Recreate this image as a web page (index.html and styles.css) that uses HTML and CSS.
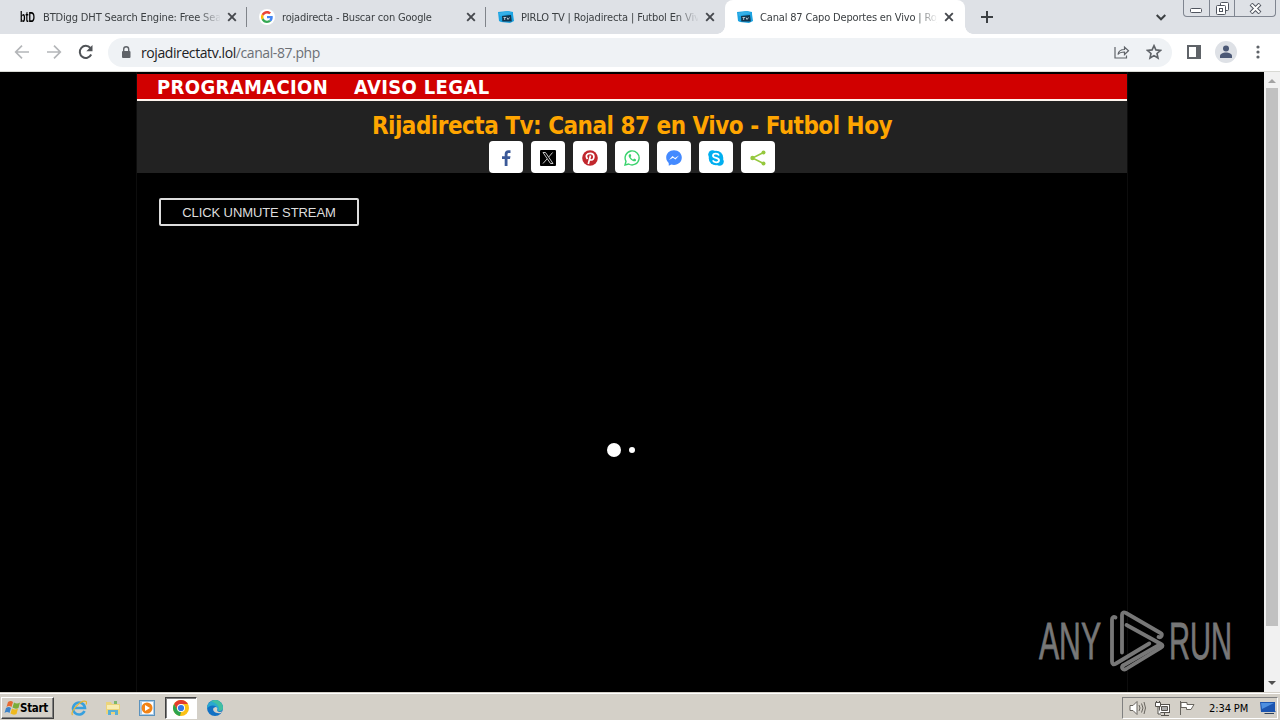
FILE: index.html
```
<!DOCTYPE html>
<html lang="es">
<head>
    <meta charset="UTF-8">
    <meta name="viewport" content="width=device-width, initial-scale=1.0">
    <title>Canal 87 Capo Deportes en Vivo</title>
    <link rel="stylesheet" href="styles.css">
</head>
<body>

    <svg class="defs" width="0" height="0">
        <symbol id="close" viewBox="0 0 10 10"><path d="M1.2 1.2l7.6 7.6M8.8 1.2L1.2 8.8" stroke="#45484d" stroke-width="1.9"/></symbol>
        <symbol id="tv" viewBox="0 0 16 16">
            <path d="M0 3l10-1 5 1v2l1 7-4 2-9-1-2-1z" fill="#1ba3e2"/>
            <path d="M1 4l9-2 4 2-12 3z" fill="#35b0e8"/>
            <path d="M4 7l9-1 .8 6.500-9.500 0z" fill="#12364f"/>
            <path d="M5.500 8.500h2.500M6.700 8.500v2.500M9 8.500l1 2 1.500-2" stroke="#b9c6cf" fill="none"/>
        </symbol>
    </svg>

    <header class="tabs">
        <div class="tab">
            <span class="favicon btd">btD</span>
            <span class="title t1">BTDigg DHT Search Engine: Free Search</span>
            <svg class="x"><use href="#close"/></svg>
        </div>
        <div class="tab">
            <span class="favicon google"><svg width="12" height="12" viewBox="0 0 48 48">
                <path fill="#EA4335" d="M24 9.500c3.500 0 6.700 1.200 9.200 3.600l6.900-6.900C35.900 2.400 30.500 0 24 0 14.600 0 6.500 5.400 2.600 13.200l8 6.200C12.400 13.700 17.700 9.500 24 9.500z"/>
                <path fill="#4285F4" d="M47 24.500c0-1.600-.2-3.100-.4-4.500H24v9h12.900c-.6 3-2.200 5.500-4.700 7.200l7.700 6C44.400 38 47 31.800 47 24.500z"/>
                <path fill="#FBBC05" d="M10.500 28.600a14 14 0 0 1 0-9.200l-8-6.200a24 24 0 0 0 0 21.600z"/>
                <path fill="#34A853" d="M24 48c6.500 0 11.900-2.100 15.900-5.800l-7.700-6c-2.200 1.500-5 2.300-8.200 2.300-6.300 0-11.600-4.200-13.500-9.900l-8 6.200C6.500 42.600 14.600 48 24 48z"/>
            </svg></span>
            <span class="title t2">rojadirecta - Buscar con Google</span>
            <svg class="x"><use href="#close"/></svg>
        </div>
        <div class="tab last">
            <svg class="favicon"><use href="#tv"/></svg>
            <span class="title t3">PIRLO TV | Rojadirecta | Futbol En Vivo</span>
            <svg class="x"><use href="#close"/></svg>
        </div>
        <div class="tab active">
            <svg class="favicon"><use href="#tv"/></svg>
            <span class="title t4">Canal 87 Capo Deportes en Vivo | Rojadirecta</span>
            <svg class="x"><use href="#close"/></svg>
        </div>
        <svg class="plus" width="12" height="12"><path d="M6 0v12M0 6h12" stroke="#3c4043" stroke-width="2"/></svg>
        <svg class="chevron" width="10" height="7"><path d="M.7 1l4.300 4.300L9.300 1" fill="none" stroke="#3c4043" stroke-width="2"/></svg>
        <div class="window-btns">
            <span><svg width="13" height="5"><rect x=".5" y=".5" width="11" height="4" rx="1" fill="#fff" stroke="#50555f"/></svg></span>
            <span><svg width="13" height="13" fill="#fff" stroke="#50555f"><rect x="4.500" y=".5" width="8" height="8" rx="1"/><rect x=".5" y="3.500" width="9" height="9" rx="1"/><rect x="3.500" y="6.500" width="3" height="3"/></svg></span>
            <span><svg width="13" height="11"><path d="M2 1l9 9M11 1l-9 9" stroke="#50555f" stroke-width="4"/><path d="M2.500 1.500l8 8M10.500 1.500l-8 8" stroke="#fff" stroke-width="2"/></svg></span>
        </div>
    </header>

    <div class="toolbar">
        <div class="nav">
            <svg width="16" height="16" fill="none" stroke="#b4b6b9" stroke-width="1.700"><path d="M15 8H2M8 1.700L1.700 8 8 14.300"/></svg>
            <svg width="16" height="16" fill="none" stroke="#b4b6b9" stroke-width="1.700"><path d="M1 8h13M8 1.700L14.300 8 8 14.300"/></svg>
            <svg width="16" height="16"><path d="M13.200 10.500A6 6 0 1 1 12.400 4" fill="none" stroke="#505357" stroke-width="2"/><path d="M14.500 1v6.200H8.300z" fill="#505357"/></svg>
        </div>
        <div class="address">
            <svg class="lock" width="10" height="13"><rect x="1" y="5" width="8.500" height="7" rx="1" fill="#5f6368"/><path d="M2.700 5V3.200a2.500 2.500 0 0 1 5 0V5" fill="none" stroke="#5f6368" stroke-width="1.400"/></svg>
            <span class="url">rojadirectatv.lol<span class="path">/canal-87.php</span></span>
            <svg class="share" width="16" height="14" fill="none" stroke="#5f6368" stroke-width="1.200"><path d="M1 2v11h11.500v-2.500M4 9.500c.5-3.500 3-5 6.500-5V2l4 3.700-4 3.800V7C7.500 7 5.500 7.500 4 9.500z"/></svg>
            <svg width="16" height="16"><path d="M8 1.700l1.900 4.200 4.600.5L11 9.500l1 4.500-4-2.400L4 14l1-4.500-3.500-3.100 4.600-.5z" fill="none" stroke="#5f6368" stroke-width="1.600"/></svg>
        </div>
        <svg class="panel" width="14" height="14"><rect x="1" y="1" width="12" height="12" fill="none" stroke="#5f6368" stroke-width="2"/><path d="M9 1h4v12H9z" fill="#5f6368"/></svg>
        <svg class="avatar" width="22" height="22"><circle cx="11" cy="11" r="11" fill="#dee1e6"/><circle cx="11" cy="7.500" r="3" fill="#4c5976"/><path d="M5 17v-2c0-2 3-3.500 6-3.500s6 1.500 6 3.500v2z" fill="#4c5976"/></svg>
        <svg width="4" height="14" fill="#5f6368"><circle cx="2" cy="2" r="1.600"/><circle cx="2" cy="7" r="1.600"/><circle cx="2" cy="12" r="1.600"/></svg>
    </div>

    <div class="viewport">
        <div class="page">
            <nav class="menu">
                <a class="m1">PROGRAMACION</a>
                <a class="m2">AVISO LEGAL</a>
            </nav>
            <div class="heading">
                <h1>Rijadirecta Tv: Canal 87 en Vivo - Futbol Hoy</h1>
                <div class="social">
                    <span><svg viewBox="0 0 16 16"><path d="M6.700 16V9H4V6.200h2.700V4c0-2.500 1.400-3.800 3.700-3.800l2.100.1v2.600H11c-1.200 0-1.500.6-1.500 1.400v1.900h3L12 9H9.500v7z" fill="#3b5998"/></svg></span>
                    <span><svg viewBox="0 0 16 16"><rect width="16" height="16" rx="1" fill="#000"/><path d="M3 2.500h2.500l7.500 11h-2.500zM12.600 2.500L8.700 7M7 9l-4 4.500" fill="none" stroke="#ddd" stroke-width=".9"/></svg></span>
                    <span><svg viewBox="0 0 16 16"><circle cx="8" cy="8" r="7.800" fill="#c1272d"/><path d="M5.500 9C3 5.500 5 3.300 8.200 3.300c5 0 4.500 6.700 1.100 6.700-1 0-1.600-.6-1.600-.6M8.500 5.500L6.300 14" fill="none" stroke="#fff" stroke-width="1.700"/></svg></span>
                    <span><svg viewBox="0 0 16 16"><path d="M1 15l1-3.700A7 7 0 1 1 4.700 14z" fill="#fff" stroke="#3bd36e" stroke-width="1.400"/><path d="M5.400 4.200c-2 1.500.5 4.500 2 5.700 1.700 1.400 3.700 2.200 4.600.5v-1L10.200 8.500l-1 1C8 9 7 8 6.500 6.900l.8-1L6.500 4z" fill="#3bd36e"/></svg></span>
                    <span><svg viewBox="0 0 16 16"><path d="M8 .3C3.500.3.200 3.400.2 7.600c0 2.300 1 4.200 2.500 5.400L2.800 15.700l2.500-1.200c.9.200 1.700.4 2.700.4 4.500 0 7.800-3.100 7.800-7.300S12.500.3 8 .3z" fill="#448aff"/><path d="M3 10l3.500-4L9 8l4-2.400-3.500 4L7 7.700z" fill="#fff"/></svg></span>
                    <span><svg viewBox="0 0 16 16"><circle cx="4.500" cy="4.500" r="4.300" fill="#00aff0"/><circle cx="11.500" cy="11.500" r="4.300" fill="#00aff0"/><circle cx="8" cy="8" r="7.300" fill="#00aff0"/><path d="M11 5.500C10 3 5 3 5 5.700c0 2.900 6 1.600 6 4.500 0 2.700-5 2.800-6.200.2" fill="none" stroke="#fff" stroke-width="1.800"/></svg></span>
                    <span><svg viewBox="0 0 16 16"><path d="M13.500 2.500L2.500 8l11 5.500" fill="none" stroke="#95c83d" stroke-width="1.500"/><g fill="#95c83d"><circle cx="13.500" cy="2.500" r="2"/><circle cx="2.500" cy="8" r="2.200"/><circle cx="13.500" cy="13.500" r="2"/></g></svg></span>
                </div>
            </div>
            <div class="player">
                <button class="unmute">CLICK UNMUTE STREAM</button>
                <div class="loader"><i></i><i></i></div>
            </div>
        </div>
        <div class="scrollbar">
            <svg width="8" height="4"><path d="M0 4l4-4 4 4z" fill="#a3a3a3"/></svg>
            <div class="thumb"></div>
            <svg width="8" height="4"><path d="M0 0l4 4 4-4z" fill="#505050"/></svg>
        </div>
        <svg class="watermark" width="204" height="68" viewBox="0 0 204 68">
            <g fill="#777" stroke="#777" stroke-width=".8">
                <text x="1" y="50" textLength="62" lengthAdjust="spacingAndGlyphs">ANY</text>
                <text x="131" y="50" textLength="63" lengthAdjust="spacingAndGlyphs">RUN</text>
            </g>
            <g fill="none" stroke="#777" stroke-width="3.800" stroke-linejoin="round" stroke-linecap="round">
                <path d="M77.500 8.500c-2-1.200-3.500 0-3.500 2v42c0 3 1.500 3.500 4 2l33.300-20"/>
                <path d="M84 43.500V6c0-2.500 1.500-3.300 4-2l34.500 20c2.500 1.500 1 5-2 4"/>
                <path d="M88.500 16l34.500 19c2 1.200 2 2.500 0 3.700L88 60c-3 1.500-5.500-1.500-3-3.500"/>
                <path d="M85 56.500l37-21"/>
            </g>
        </svg>
    </div>

    <footer class="taskbar">
        <div class="start">
            <svg width="17" height="16" viewBox="0 0 17 16"><path d="M4 2q3-2 5 0L7.500 7Q5 5 2.500 7z" fill="#e66a32"/><path d="M10 2.500q3 2 6 0L14.500 8q-3 1.500-6-.5z" fill="#7aad3b"/><path d="M2 8q3-2 5 0l-1.500 5Q3 11 .5 13z" fill="#3c83c9"/><path d="M8 8.500q3 2 6 0L12.500 14q-3 1.500-6-.5z" fill="#efb91e"/></svg>
            <span>Start</span>
        </div>
        <div class="apps">
            <span><svg viewBox="0 0 16 16"><path d="M13.500 11a6 6 0 1 1 .5-3H4" fill="none" stroke="#38a0de" stroke-width="2.600"/><path d="M1.500 15C-1 12 10-1 15 1.500c.8.500.5 2 0 3" fill="none" stroke="#e7b52f" stroke-width="1.200"/></svg></span>
            <span><svg viewBox="0 0 16 16"><path d="M1 2h5l1 2h8v10H1z" fill="#ecd47a"/><path d="M2 5h12v4H2z" fill="#f8edb2"/><path d="M3 15v-5h10v5h-3v-3H6v3z" fill="#58afd5"/><path d="M9 1h3v3H9z" fill="#7cb76a"/></svg></span>
            <span><svg viewBox="0 0 16 16"><rect x=".5" y=".5" width="15" height="15" fill="#a9cbe8" stroke="#5b92bd"/><rect x="3" y="2" width="11" height="12" fill="#fff"/><circle cx="8" cy="8" r="5.500" fill="#f28316"/><path d="M6 5l5 3-5 3z" fill="#fff"/></svg></span>
            <span class="current"><svg viewBox="0 0 16 16"><circle cx="8" cy="8" r="8" fill="#fbc116"/><path d="M1.100 4A8 8 0 0 1 14.900 4H8L4.500 10z" fill="#e33b2e"/><path d="M1.100 4l3.400 6L8 12l-1 4A8 8 0 0 1 1.100 4z" fill="#2da44e"/><circle cx="8" cy="8" r="4" fill="#fff"/><circle cx="8" cy="8" r="3.100" fill="#3478e5"/></svg></span>
            <span><svg viewBox="0 0 16 16"><circle cx="8" cy="8" r="8" fill="#1271c4"/><path d="M.3 6A8 8 0 0 1 16 8c0 3-4 4-6 2.500C11 8 9 5.500 5.500 5.500 3 5.500 1 7 0 9z" fill="#2ba9cf"/><path d="M8 0a8 8 0 0 1 8 8c0 2-2 3-4 3 1-5-3-8-8-9.700A8 8 0 0 1 8 0z" fill="#42bfa0"/><path d="M6.500 8c-1.500 3 2 6 7.500 5l1-1.500c-2 .8-5 .5-5-1.500 1-1.500 0-3-1.500-3z" fill="#d4d0c8"/></svg></span>
        </div>
        <div class="tray">
            <svg width="17" height="14" fill="#fff" stroke="#68655f"><path d="M1 4.500h3l4-4v13l-4-4H1z"/><path d="M10 4q2 3 0 6M12.500 2.500q3 4.500 0 9M15 1q3 6 0 12" fill="none"/></svg>
            <svg width="17" height="15" fill="#fff" stroke="#55524d"><rect x="5.500" y="3.500" width="10" height="8"/><path d="M7.500 5.500h6v4h-6z" fill="#aaa"/><path d="M7 14.500h8M10.500 12v2M1.500 1.500h5v4h-5zM2.500 0v2M5.500 0v2M4 6v7h3"/></svg>
            <svg width="17" height="14" fill="#fff" stroke="#68655f"><path d="M1.500 0v14M2 1.500h6v2h7l-3 5H7.500v-2H2z"/></svg>
            <span class="clock">2:34 PM</span>
            <svg width="16" height="14"><path d="M0 1h15v9l1 1H1z" fill="#1c55b0"/><path d="M1 2h13L2 8z" fill="#4d8fe0"/><path d="M4 12h10v1H5z" fill="#2c405c"/></svg>
        </div>
    </footer>

</body>
</html>
```

FILE: styles.css
```
* {
    box-sizing: border-box;
}

body {
    margin: 0;
    width: 1280px;
    height: 720px;
    overflow: hidden;
    display: flex;
    flex-direction: column;
    font-family: "DejaVu Sans Condensed", "DejaVu Sans", sans-serif;
    font-size: 11px;
    color: #3c4043;
}

svg {
    display: block;
    flex: none;
}

.defs {
    position: absolute;
}

/* tab strip */
.tabs {
    position: relative;
    height: 34px;
    flex: none;
    display: flex;
    align-items: center;
    padding-left: 8px;
    background: #dee1e6;
}

.tab {
    position: relative;
    width: 239px;
    height: 34px;
    flex: none;
    display: flex;
    align-items: center;
    padding-left: 12px;
}

.tab:not(.last):not(.active)::after {
    content: "";
    position: absolute;
    right: 0;
    top: 7px;
    width: 1px;
    height: 20px;
    background: #80848a;
}

.tab.active {
    width: 240px;
    background: #fff;
    border-radius: 8px 8px 0 0;
}

.tab.active::before,
.tab.active::after {
    content: "";
    position: absolute;
    bottom: 0;
    left: -8px;
    width: 8px;
    height: 8px;
    background: radial-gradient(circle at 0 0, #dee1e6 7.5px, #fff 8px);
}

.tab.active::after {
    left: 240px;
    background: radial-gradient(circle at 100% 0, #dee1e6 7.5px, #fff 8px);
}

.favicon {
    width: 16px;
    height: 16px;
    flex: none;
}

.btd {
    font: bold 14px/16px "Liberation Sans", sans-serif;
    color: #000;
    transform: scaleX(.64);
    transform-origin: left;
}

.google {
    display: flex;
    align-items: center;
    justify-content: center;
    border-radius: 50%;
    background: #fff;
}

.title {
    width: 177px;
    margin-left: 7px;
    flex: none;
    overflow: hidden;
    white-space: nowrap;
    -webkit-mask-image: linear-gradient(to right, #000 155px, transparent 178px);
    mask-image: linear-gradient(to right, #000 155px, transparent 178px);
}

.t1 {
    letter-spacing: -.15px;
}

.t2 {
    letter-spacing: -.19px;
}

.t3 {
    letter-spacing: -.13px;
}

.t4 {
    letter-spacing: -.17px;
}

.x {
    width: 10px;
    height: 10px;
    margin-left: 7px;
}

.plus {
    margin-left: 16px;
}

.chevron {
    margin-left: auto;
    margin-right: 17px;
}

.window-btns {
    width: 93px;
    height: 17px;
    margin-right: 4px;
    align-self: flex-start;
    display: grid;
    grid-template-columns: 25px 25px 1fr;
    border: 1px solid #7f8590;
    border-top: 0;
    border-radius: 0 0 4px 4px;
}

.window-btns span {
    display: flex;
    align-items: center;
    justify-content: center;
}

.window-btns span:first-child {
    padding-top: 5px;
}

.window-btns span + span {
    border-left: 1px solid #7f8590;
}

/* toolbar */
.toolbar {
    height: 38px;
    flex: none;
    display: flex;
    align-items: center;
    padding: 0 20px 1px 14px;
    background: #fff;
    border-bottom: 1px solid #d8d9d4;
}

.nav {
    display: flex;
    gap: 16px;
    width: 94px;
    flex: none;
}

.address {
    flex: 1;
    height: 29px;
    display: flex;
    align-items: center;
    padding: 0 10px 0 13px;
    border-radius: 15px;
    background: #eff2f5;
}

.url {
    margin-left: 10px;
    font-family: "Open Sans", sans-serif;
    font-size: 14px;
    letter-spacing: -.41px;
    color: #202124;
}

.path {
    color: #6c7075;
}

.share {
    margin-left: auto;
    margin-right: 16px;
}

.panel {
    margin-left: 15px;
}

.avatar {
    margin: 0 19px 0 14px;
}

/* page */
.viewport {
    position: relative;
    height: 620px;
    flex: none;
    display: flex;
    background: #000;
}

.page {
    width: 992px;
    height: 620px;
    margin: 0 136px;
    padding-top: 2px;
    border: solid #0d0d0d;
    border-width: 0 1px;
    flex: none;
}

.menu {
    height: 27px;
    display: flex;
    gap: 26px;
    padding-left: 20px;
    background: #d10000;
    border-bottom: 2px solid #fff5ee;
    font-weight: bold;
    font-size: 20px;
    line-height: 26px;
    letter-spacing: .35px;
    color: #fff;
    white-space: nowrap;
}

.m1 {
    width: 171px;
}

.heading {
    height: 72px;
    background: #222;
}

h1 {
    height: 40px;
    margin: 0;
    padding-top: 10px;
    text-align: center;
    font-size: 24px;
    line-height: 31px;
    letter-spacing: -.5px;
    color: #ffa500;
    white-space: nowrap;
}

.social {
    display: flex;
    justify-content: center;
    gap: 8px;
}

.social span {
    width: 34px;
    height: 32px;
    display: flex;
    align-items: center;
    justify-content: center;
    padding-top: 2px;
    background: #fff;
    border-radius: 4px;
}

.social svg {
    width: 16px;
    height: 16px;
}

.player {
    padding: 25px 22px;
}

.unmute {
    display: block;
    width: 200px;
    height: 28px;
    padding: 0;
    background: #000;
    border: 2px solid #ddd;
    border-radius: 2px;
    font: 13px "Liberation Sans", sans-serif;
    letter-spacing: -.1px;
    color: #ddd;
}

.loader {
    display: flex;
    align-items: center;
    gap: 8px;
    margin: 217px 0 0 448px;
}

.loader i {
    width: 14px;
    height: 14px;
    border-radius: 50%;
    background: #fff;
}

.loader i + i {
    width: 6px;
    height: 6px;
}

.scrollbar {
    width: 16px;
    display: flex;
    flex-direction: column;
    align-items: center;
    padding: 7px 0;
    background: #f1f1f1;
}

.thumb {
    width: 12px;
    height: 538px;
    margin: 5px 0 auto;
    background: #c1c1c1;
}

.watermark {
    position: absolute;
    left: 1038px;
    top: 537px;
}

.watermark text {
    font: 52px "Liberation Sans", sans-serif;
}

/* taskbar */
.taskbar {
    height: 28px;
    display: flex;
    align-items: center;
    padding: 3px 2px 0 1px;
    background: #d4d0c8;
    border-top: 1px solid #d4d0c8;
    box-shadow: inset 0 1px #fff;
    color: #000;
}

.start {
    width: 53px;
    height: 22px;
    display: flex;
    align-items: center;
    padding-left: 2px;
    border: 1px solid;
    border-color: #fff #404040 #404040 #fff;
    box-shadow: inset -1px -1px #808080;
    font-weight: bold;
    font-size: 11.5px;
    letter-spacing: -.3px;
}

.start span {
    margin-left: -1px;
}

.apps {
    display: flex;
    gap: 2px;
    margin-left: 9px;
}

.apps span {
    width: 32px;
    height: 22px;
    display: flex;
    align-items: center;
    justify-content: center;
}

.apps svg {
    width: 16px;
    height: 16px;
}

.apps .current {
    background: #fff;
    border: 1px solid;
    border-color: #404040 #fff #fff #404040;
    box-shadow: inset 1px 1px #808080;
}

.tray {
    width: 156px;
    height: 22px;
    margin-left: auto;
    display: flex;
    align-items: center;
    gap: 8px;
    padding-left: 6px;
    border: 1px solid;
    border-color: #808080 #fff #fff #808080;
}

.clock {
    width: 43px;
    margin-left: 5px;
    letter-spacing: -.1px;
    white-space: nowrap;
}
```
